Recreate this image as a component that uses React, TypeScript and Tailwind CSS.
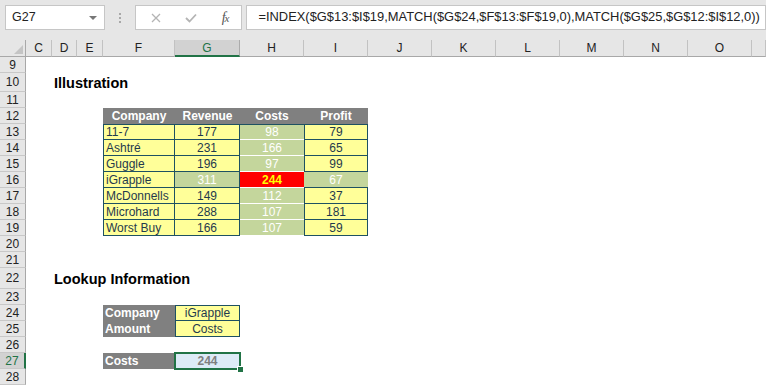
import React from "react";

const COLS = ["C", "D", "E", "F", "G", "H", "I", "J", "K", "L", "M", "N", "O", ""];
const ROWS = [9, 10, 11, 12, 13, 14, 15, 16, 17, 18, 19, 20, 21, 22, 23, 24, 25, 26, 27, 28];

const companies: [string, number, number, number][] = [
  ["11-7", 177, 98, 79],
  ["Ashtré", 231, 166, 65],
  ["Guggle", 196, 97, 99],
  ["iGrapple", 311, 244, 67],
  ["McDonnells", 149, 112, 37],
  ["Microhard", 288, 107, 181],
  ["Worst Buy", 166, 107, 59],
];

const yellow = "bg-[#ffff99] text-[#1f3a4d]";
const green = "bg-[#c4d69c] text-white";
const dark = "border-[#1e5162]";

function cellFor(row: number, col: string): { cls: string; body?: React.ReactNode } {
  if (row === 10 && col === "D")
    return { cls: "pl-[2px] pt-[1px] text-[14.5px] font-bold text-black", body: "Illustration" };
  if (row === 22 && col === "D")
    return { cls: "pl-[2px] pt-[1px] text-[14.5px] font-bold text-black", body: "Lookup Information" };

  // data table header
  if (row === 12 && ["F", "G", "H", "I"].includes(col)) {
    const label = { F: "Company", G: "Revenue", H: "Costs", I: "Profit" }[col];
    return { cls: "bg-[#808080] text-white font-bold justify-center", body: label };
  }

  if (row >= 13 && row <= 19) {
    const [name, rev, cost, profit] = companies[row - 13];
    const hit = name === "iGrapple";
    const top = row === 13 ? "border-t" : "";
    if (col === "F")
      return { cls: `${yellow} ${dark} ${top} border-l border-r border-b pl-[2px]`, body: name };
    if (col === "G")
      return {
        cls: `${hit ? green : yellow} ${dark} ${top} border-r border-b justify-center`,
        body: rev,
      };
    if (col === "H") {
      if (hit)
        return {
          cls: "bg-[#ff0000] text-[#ffff00] font-bold justify-center border-b border-white",
          body: cost,
        };
      return {
        cls: `${green} justify-center border-b ${row === 13 ? `border-t ${dark} border-b-white` : "border-white"}`,
        body: cost,
      };
    }
    if (col === "I")
      return {
        cls: `${hit ? green : `${yellow} border-l border-r`} ${dark} ${top} border-b justify-center`,
        body: profit,
      };
  }

  // lookup block
  if ((row === 24 || row === 25 || row === 27) && col === "F") {
    const label = row === 24 ? "Company" : row === 25 ? "Amount" : "Costs";
    return { cls: "bg-[#808080] text-white font-bold pl-[2px]", body: label };
  }
  if (row === 24 && col === "G")
    return { cls: `${yellow} ${dark} border justify-center`, body: "iGrapple" };
  if (row === 25 && col === "G")
    return { cls: `${yellow} ${dark} border-x border-b justify-center`, body: "Costs" };
  if (row === 27 && col === "G")
    return {
      cls: "relative bg-[#ddebf7] text-[#7f7f7f] font-bold justify-center",
      body: (
        <>
          244
          <span className="absolute -left-[1px] -top-[1px] -right-[1px] -bottom-[1px] border-2 border-[#217346]" />
          <span className="absolute -right-[4px] -bottom-[4px] w-[7px] h-[7px] bg-[#217346] border border-white" />
        </>
      ),
    };

  return { cls: "" };
}

function TopBar() {
  return (
    <div className="h-[40px] bg-[#e6e6e6] flex items-start pt-[5px] pl-[5px]">
      <div className="w-[102px] h-[25px] bg-white border border-[#c6c6c6] flex items-center pl-[6px] pr-[7px] justify-between">
        <span className="text-[12.5px] text-[#222]">G27</span>
        <span className="w-0 h-0 border-l-[4px] border-r-[4px] border-t-[4px] border-l-transparent border-r-transparent border-t-[#777]" />
      </div>
      <div className="w-[30px] h-[25px] flex flex-col items-center justify-center gap-[2px]">
        <span className="w-[2px] h-[2px] bg-[#a8a8a8]" />
        <span className="w-[2px] h-[2px] bg-[#a8a8a8]" />
        <span className="w-[2px] h-[2px] bg-[#a8a8a8]" />
      </div>
      <div className="w-[110px] h-[25px] bg-white border border-[#c6c6c6] flex items-center">
        <svg width="10" height="10" viewBox="0 0 10 10" className="ml-[15px]">
          <path d="M1 1 L9 9 M9 1 L1 9" stroke="#b4b4b4" strokeWidth="1.3" />
        </svg>
        <svg width="12" height="10" viewBox="0 0 12 10" className="ml-[24px]">
          <path d="M1 5 L4.5 8.5 L11 1.5" stroke="#b4b4b4" strokeWidth="1.8" fill="none" />
        </svg>
        <span className="ml-[25px] text-[14px] italic text-[#555] font-['Liberation_Serif',serif] tracking-[-1px]">
          f<span className="text-[11px]">x</span>
        </span>
      </div>
      <div className="ml-[4px] w-[530px] h-[25px] bg-white border border-[#c6c6c6] flex items-center pl-[11px]">
        <span className="text-[12.9px] text-[#222] whitespace-nowrap">
          =INDEX($G$13:$I$19,MATCH($G$24,$F$13:$F$19,0),MATCH($G$25,$G$12:$I$12,0))
        </span>
      </div>
    </div>
  );
}

export default function App() {
  return (
    <div className="w-[766px] h-[385px] overflow-hidden bg-white font-['Liberation_Sans',Arial,sans-serif] text-[12px] leading-none">
      <TopBar />
      <div className="grid grid-cols-[26px_26px_25px_26px_72px_65px_64px_64px_64px_64px_64px_64px_64px_64px_1fr] grid-rows-[17px_16px_19px_16px_16px_16px_16px_16px_16px_16px_16px_16px_16px_16px_21px_16px_16px_16px_16px_16px_16px]">
        {/* corner */}
        <div className="relative bg-[#e6e6e6] border-r border-b border-[#a8a8a8]">
          <span className="absolute right-[2px] bottom-[2px] w-0 h-0 border-l-[9px] border-b-[9px] border-l-transparent border-b-[#c4c4c4]" />
        </div>
        {COLS.map((c, i) =>
          c === "G" ? (
            <div
              key={i}
              className="bg-[#d2d2d2] border-r border-[#ababab] border-b-2 border-b-[#217346] flex items-center justify-center text-[#217346] text-[12px]"
            >
              {c}
            </div>
          ) : (
            <div
              key={i}
              className="bg-[#e6e6e6] border-r border-r-[#c2c2c2] border-b border-b-[#a8a8a8] flex items-center justify-center text-[#222] text-[12px]"
            >
              {c}
            </div>
          )
        )}
        {ROWS.map((r) => (
          <React.Fragment key={r}>
            {r === 27 ? (
              <div className="bg-[#d2d2d2] border-r-2 border-r-[#217346] border-b border-b-[#c8c8c8] flex items-center justify-center text-[#217346] text-[12px]">
                {r}
              </div>
            ) : (
              <div className="bg-[#e6e6e6] border-r border-r-[#a8a8a8] border-b border-b-[#c8c8c8] flex items-center justify-center text-[#222] text-[12px]">
                {r}
              </div>
            )}
            {COLS.map((c, i) => {
              const { cls, body } = cellFor(r, c);
              return (
                <div key={i} className={`flex items-center whitespace-nowrap ${cls}`}>
                  {body}
                </div>
              );
            })}
          </React.Fragment>
        ))}
      </div>
    </div>
  );
}
